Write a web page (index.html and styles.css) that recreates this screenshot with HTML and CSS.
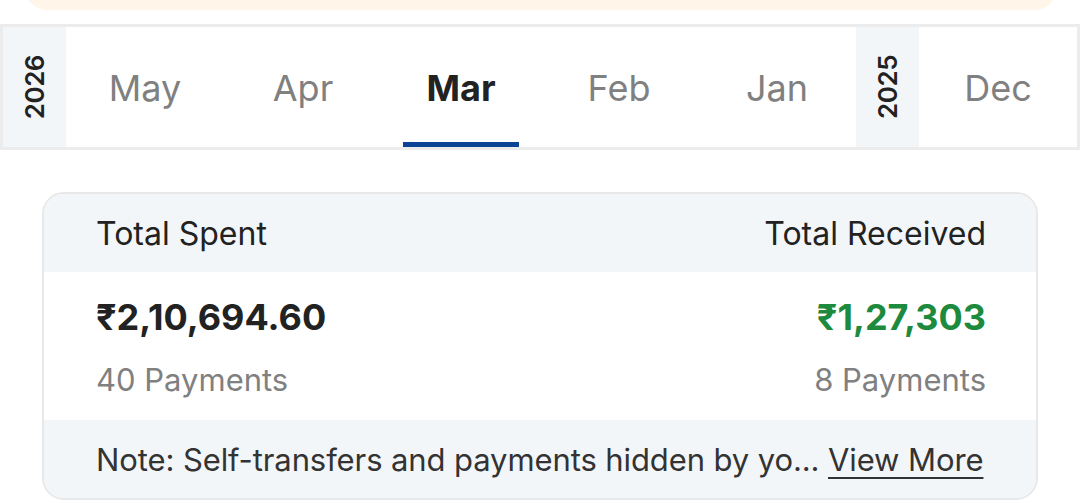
FILE: index.html
```html
<!DOCTYPE html>
<html lang="en">
<head>
    <meta charset="UTF-8">
    <meta name="viewport" content="width=device-width, initial-scale=1.0">
    <title>Payment History</title>
    <link rel="stylesheet" href="styles.css">
</head>
<body>
    <!-- Offer banner (scrolled mostly out of view) -->
    <div class="banner"></div>

    <!-- Month picker -->
    <div class="month-strip">
        <div class="year"><span>2026</span></div>
        <div class="month">May</div>
        <div class="month">Apr</div>
        <div class="month active">Mar</div>
        <div class="month">Feb</div>
        <div class="month">Jan</div>
        <div class="year"><span>2025</span></div>
        <div class="month">Dec</div>
    </div>

    <!-- Monthly summary -->
    <div class="summary">
        <div class="summary-head">
            <span>Total Spent</span>
            <span>Total Received</span>
        </div>
        <div class="summary-body">
            <div class="summary-col">
                <div class="amount">₹2,10,694.60</div>
                <div class="count">40 Payments</div>
            </div>
            <div class="summary-col right">
                <div class="amount received">₹1,27,303</div>
                <div class="count">8 Payments</div>
            </div>
        </div>
        <div class="summary-note">
            <span class="note-text">Note: Self-transfers and payments hidden by yo... <a href="#">View More</a></span>
        </div>
    </div>
</body>
</html>
```

FILE: styles.css
```css
body {
    font-family: Inter, "Noto Sans", sans-serif;
    background-color: white;
    color: #222;
    margin: 0;
}

.banner {
    height: 32px;
    margin: -22px 23px 0 25px;
    background-color: #fff5e9;
    border-radius: 0 0 22px 22px;
}

/* month picker */

.month-strip {
    display: flex;
    height: 120px;
    margin-top: 14px;
    border: 3px solid #ececec;
}

.year {
    flex: 0 0 63px;
    background-color: #f3f6f9;
    display: flex;
    justify-content: center;
    align-items: center;
}

.year span {
    writing-mode: vertical-rl;
    transform: rotate(180deg);
    font-size: 26px;
    font-weight: 600;
    letter-spacing: -0.5px;
    color: #222;
}

.month {
    flex: 0 0 158px;
    position: relative;
    display: flex;
    justify-content: center;
    align-items: center;
    padding-top: 1px;
    box-sizing: border-box;
    font-size: 36px;
    color: #808080;
}

.month.active {
    font-weight: 700;
    color: #222;
}

.month.active::after {
    content: "";
    position: absolute;
    bottom: 0;
    left: 21px;
    right: 21px;
    height: 5px;
    background-color: #0b4494;
}

/* summary card */

.summary {
    margin: 42px 42px 0;
    border: 2px solid #e8e8e8;
    border-radius: 22px;
    overflow: hidden;
}

.summary-head {
    display: flex;
    justify-content: space-between;
    align-items: center;
    height: 78px;
    padding: 0 50px 0 52px;
    background-color: #f3f6f9;
    font-size: 32px;
}

.summary-body {
    display: flex;
    justify-content: space-between;
    padding: 23px 50px 20px 52px;
}

.summary-col {
    display: flex;
    flex-direction: column;
    gap: 21px;
}

.summary-col.right {
    align-items: flex-end;
}

.amount {
    font-size: 36px;
    font-weight: 700;
    line-height: 44px;
}

.amount.received {
    color: #1d8a3e;
}

.count {
    font-size: 31px;
    line-height: 40px;
    color: #808080;
}

.summary-note {
    display: flex;
    align-items: center;
    height: 78px;
    padding: 0 50px 0 52px;
    background-color: #f3f6f9;
    font-size: 31px;
    letter-spacing: -0.1px;
    white-space: nowrap;
}

.note-text {
    color: #333;
}

.note-text a {
    color: #333;
    text-decoration-thickness: 2px;
    text-underline-offset: 6px;
}
```
